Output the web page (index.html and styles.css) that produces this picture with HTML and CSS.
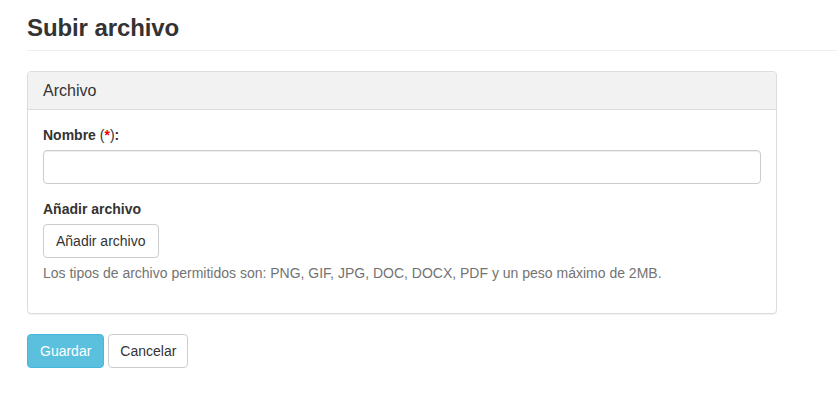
FILE: index.html
```html
<!DOCTYPE html>
<html lang="es">
<head>
<meta charset="utf-8">
<title>Subir archivo</title>
<link rel="stylesheet" href="styles.css">
</head>
<body>
<main class="page">
  <header class="page-header">
    <h1 class="page-title">Subir archivo</h1>
  </header>
  <form class="upload-form">
    <section class="panel">
      <div class="panel-heading">
        <h3 class="panel-title">Archivo</h3>
      </div>
      <div class="panel-body">
        <div class="form-group">
          <label class="control-label" for="nombre">Nombre <span class="paren">(<span class="required">*</span>)</span>:</label>
          <input class="form-control" id="nombre" type="text">
        </div>
        <div class="form-group">
          <label class="control-label">Añadir archivo</label>
          <div><button type="button" class="btn btn-default">Añadir archivo</button></div>
          <p class="help-block">Los tipos de archivo permitidos son: PNG, GIF, JPG, DOC, DOCX, PDF y un peso máximo de 2MB.</p>
        </div>
      </div>
    </section>
    <div class="actions">
      <button type="submit" class="btn btn-info">Guardar</button>
      <button type="button" class="btn btn-default btn-cancel">Cancelar</button>
    </div>
  </form>
</main>
</body>
</html>
```

FILE: styles.css
```css
* { box-sizing: border-box; }

html, body {
  margin: 0;
  padding: 0;
  background: #fff;
}

body {
  font-family: "Liberation Sans", Arial, Helvetica, sans-serif;
  font-size: 14px;
  line-height: 20px;
  color: #333;
}

.page {
  padding: 0 0 0 27px;
}

.page-header {
  padding: 15px 0 9px;
  border-bottom: 1px solid #eee;
}

.page-title {
  margin: 0;
  font-size: 24px;
  line-height: 26px;
  font-weight: 700;
  letter-spacing: -0.1px;
  color: #333;
}

.upload-form {
  margin: 0;
  padding-top: 20px;
}

.panel {
  width: 750px;
  background: #fff;
  border: 1px solid #ddd;
  border-radius: 4px;
  margin-bottom: 20px;
  box-shadow: 0 1px 1px rgba(0, 0, 0, 0.05);
}

.panel-heading {
  padding: 10px 15px;
  background: #f2f2f2;
  border-bottom: 1px solid #ddd;
  border-radius: 3px 3px 0 0;
}

.panel-title {
  margin: 0;
  font-size: 16px;
  line-height: 17px;
  font-weight: 500;
  color: #333;
}

.panel-body {
  padding: 15px;
}

.form-group {
  margin-bottom: 15px;
}

.control-label {
  display: block;
  margin-bottom: 5px;
  font-weight: 700;
}

.paren {
  font-weight: 400;
}

.required {
  color: #e00;
  font-weight: 700;
}

.form-control {
  display: block;
  width: 100%;
  height: 34px;
  padding: 6px 12px;
  font: inherit;
  color: #555;
  background: #fff;
  border: 1px solid #ccc;
  border-radius: 4px;
  box-shadow: inset 0 1px 1px rgba(0, 0, 0, 0.075);
  outline: none;
}

.help-block {
  margin: 5px 0 10px;
  color: #737373;
}

.btn {
  display: inline-block;
  height: 34px;
  padding: 6px 12px;
  font-family: inherit;
  font-size: 14px;
  line-height: 20px;
  border: 1px solid transparent;
  border-radius: 4px;
  cursor: pointer;
}

.btn-default {
  color: #333;
  background: #fff;
  border-color: #ccc;
}

.btn-cancel {
  padding: 6px 11px;
}

.btn-info {
  color: #fff;
  background: #5bc0de;
  border-color: #46b8da;
}

.actions {
  display: flex;
  gap: 4px;
}
```
